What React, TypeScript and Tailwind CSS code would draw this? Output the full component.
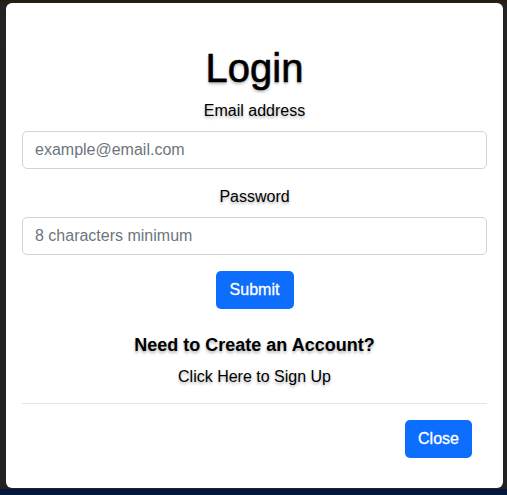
export default function App() {
  const shadow = "[text-shadow:0_2px_3px_rgba(0,0,0,0.3)]";

  return (
    <div
      className="h-[495px] w-[507px] overflow-hidden pt-[3px] pl-[6px] pr-[4px] bg-[linear-gradient(#261a0e_0px,#232323_4px,#222222_489px,#03173a_489px)]"
      style={{ fontFamily: '"Liberation Sans", Arial, sans-serif' }}
    >
      <div className="h-[485px] rounded-[6px] bg-white px-[16px] pt-[41px] flex flex-col">
        {/* Body */}
        <h1 className={`text-center text-[40px] leading-[48px] text-black [-webkit-text-stroke:0.6px_black] ${shadow}`}>
          Login
        </h1>

        <label className={`mt-[7px] text-center text-[16px] leading-[24px] text-black ${shadow}`}>
          Email address
        </label>
        <input
          type="email"
          placeholder="example@email.com"
          className="mt-[8px] h-[38px] w-full rounded-[5px] border border-[#ced4da] px-[12px] text-[16px] placeholder:text-[#6c757d] outline-none"
        />

        <label className={`mt-[16px] text-center text-[16px] leading-[24px] text-black ${shadow}`}>
          Password
        </label>
        <input
          type="password"
          placeholder="8 characters minimum"
          className="mt-[8px] h-[38px] w-full rounded-[5px] border border-[#ced4da] px-[12px] text-[16px] placeholder:text-[#6c757d] outline-none"
        />

        <div className="mt-[16px] flex justify-center">
          <button className="h-[38px] w-[78px] rounded-[5px] bg-[#0d6efd] text-[16px] text-white [-webkit-text-stroke:0.3px_white]">
            Submit
          </button>
        </div>

        <h5 className={`mt-[24px] text-center text-[18px] font-bold leading-[24px] text-black ${shadow}`}>
          Need to Create an Account?
        </h5>
        <a className={`mt-[8px] text-center text-[16px] leading-[24px] text-black ${shadow}`}>
          Click Here to Sign Up
        </a>

        {/* Footer */}
        <div className="mt-[14px] border-t border-[#e5e5e5] flex justify-end pt-[16px] pr-[15px]">
          <button className="h-[38px] w-[67px] rounded-[5px] bg-[#0d6efd] text-[16px] text-white [-webkit-text-stroke:0.3px_white]">
            Close
          </button>
        </div>
      </div>
    </div>
  );
}
